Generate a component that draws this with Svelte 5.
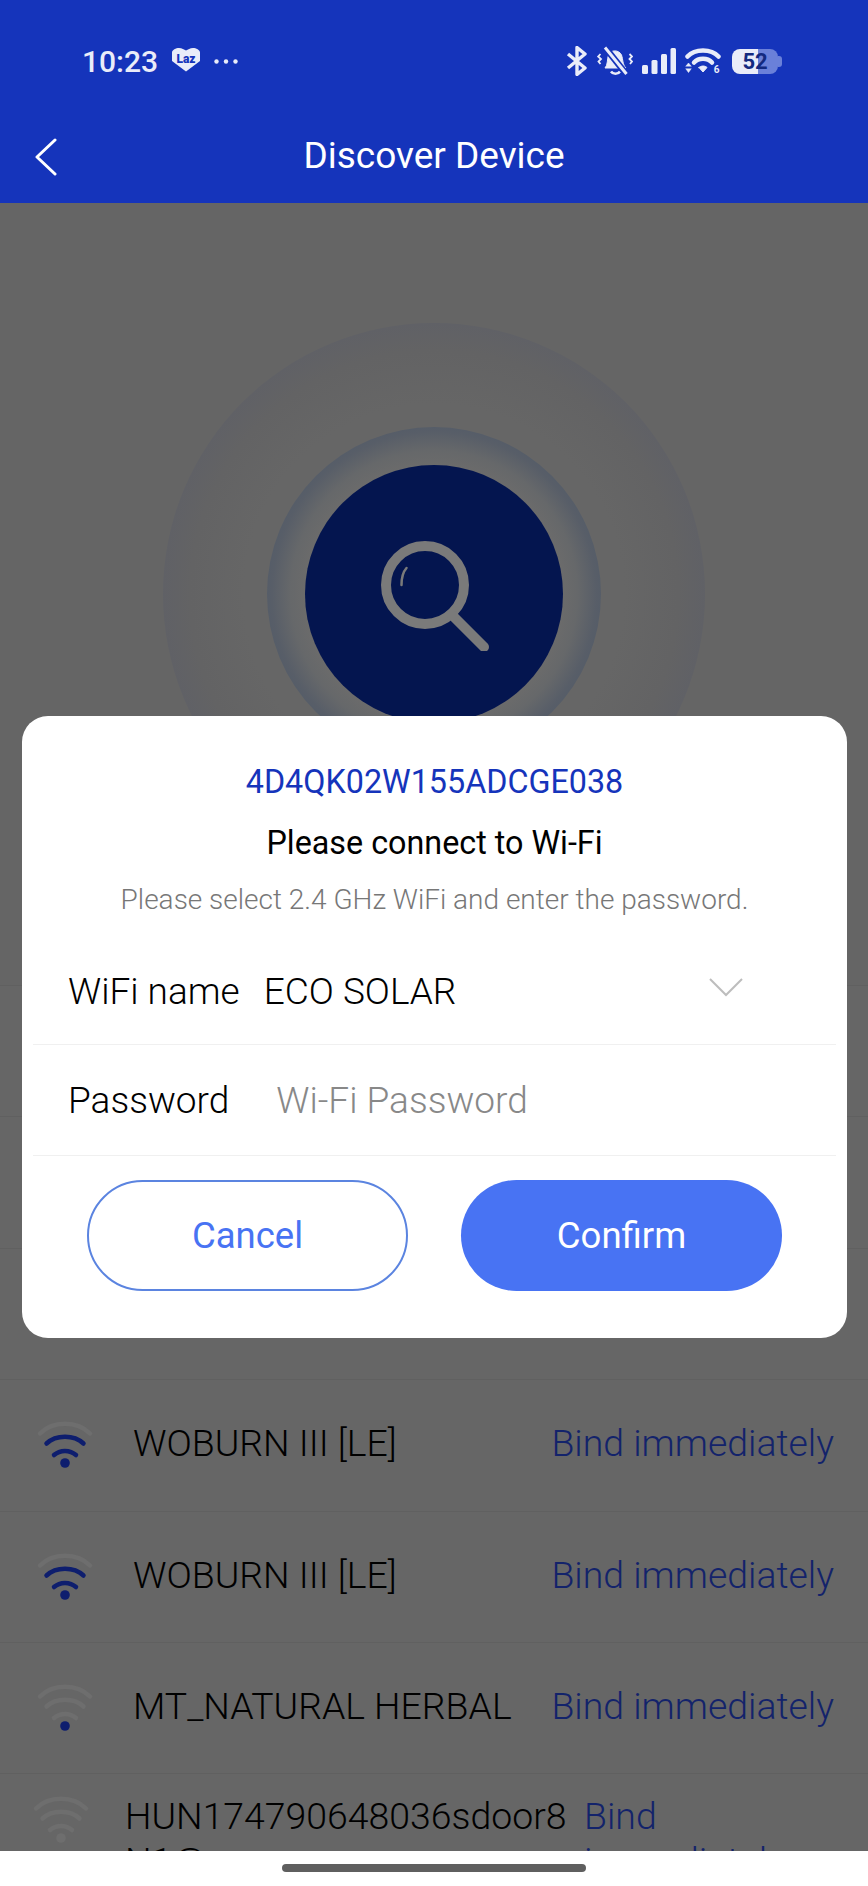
<script lang="ts">
    interface Device {
        name: string;
        level: number;
        long?: boolean;
        hidden?: boolean;
    }

    // the first rows sit behind the dialog
    const devices: Device[] = [
        { name: '', level: 0, hidden: true },
        { name: '', level: 0, hidden: true },
        { name: '', level: 0, hidden: true },
        { name: 'WOBURN III [LE]', level: 2 },
        { name: 'WOBURN III [LE]', level: 2 },
        { name: 'MT_NATURAL HERBAL', level: 0 },
        { name: 'HUN174790648036sdoor8 N1@', level: -1, long: true },
    ];

    const arcs = [
        'M6 14.5C19 1.5 43 1.5 56 14.5',
        'M12.5 24.5C22 15.5 40 15.5 49.5 24.5',
        'M20 36C26 30.5 36 30.5 42 36',
    ];
</script>

<div class="page">
    <header class="top">
        <div class="status">
            <div class="status-left">
                <span class="clock">10:23</span>
                <svg class="laz" viewBox="0 0 30 25" width="30" height="25">
                    <path d="M1 5.500C1 3 5 1 8 1 11 1 13 2.500 15 3.500 17 2.500 19 1 22 1 25 1 29 3 29 5.500V14L15 24.500 1 14Z" fill="#e9ecf9" />
                    <text x="15" y="15.500" text-anchor="middle" class="laz-text">Laz</text>
                </svg>
                <svg class="dots" viewBox="0 0 24 5" width="24" height="5">
                    <circle cx="2.500" cy="2.500" r="2.200" />
                    <circle cx="12" cy="2.500" r="2.200" />
                    <circle cx="21.500" cy="2.500" r="2.200" />
                </svg>
            </div>
            <div class="status-right">
                <svg viewBox="0 0 22 30" width="22" height="30" fill="none" stroke="#e9ecf9" stroke-width="3.400">
                    <path d="M2 8 19 22 11 28.500V1.500L19 8 2 22" stroke-linejoin="round" />
                </svg>
                <svg viewBox="0 0 36 30" width="36" height="30" fill="none" stroke="#e9ecf9">
                    <path d="M8 22C11 19 10 13 11.500 9 13.500 3.500 22 3.500 24.500 9 26 13 25.500 19 29 22Z" fill="#e9ecf9" stroke-width="1" />
                    <path d="M14 25.500C16 28.500 21 28.500 23 25.500" stroke-width="2.600" />
                    <path d="M7 0 30 29" stroke="#1534bb" stroke-width="6.500" />
                    <path d="M8 1.500 29.500 28" stroke-width="3" />
                    <path d="M3.500 8 1.200 10.500 4 13 1.500 15.500 3.500 18M32.500 8 35 10.500 32.500 13 35 15.500 33 18" stroke-width="1.800" />
                </svg>
                <svg viewBox="0 0 34 26" width="34" height="26" fill="#e9ecf9">
                    <rect x="0" y="17" width="6" height="9" rx="1.500" />
                    <rect x="9.500" y="12" width="6" height="14" rx="1.500" />
                    <rect x="19" y="6" width="6" height="20" rx="1.500" />
                    <rect x="28.500" y="0" width="5.500" height="26" rx="1.500" />
                </svg>
                <svg viewBox="0 0 38 28" width="38" height="28" fill="none" stroke="#e9ecf9" stroke-width="4.500" stroke-linecap="round">
                    <path d="M2.500 9.500C10 1.500 26 1.500 33.500 9.500" />
                    <path d="M9 15.500C13.500 10.500 22.500 10.500 27 15.500" />
                    <path d="M14 20.500 18 25 22 20.500C20 18.500 16 18.500 14 20.500Z" fill="#e9ecf9" stroke-width="1" stroke-linejoin="round" />
                    <path d="M1 19 3.500 16 6 19ZM1 22 3.500 25.500 6 22Z" fill="#e9ecf9" stroke-width="0.600" />
                    <text x="31.500" y="26" text-anchor="middle" class="wifi-six">6</text>
                </svg>
                <div class="battery">52</div>
            </div>
        </div>
        <div class="nav">
            <svg class="back" viewBox="0 0 24 38" width="24" height="38" fill="none" stroke="#fff" stroke-width="3" stroke-linecap="round" stroke-linejoin="round">
                <path d="M21 2 3 19 21 36" />
            </svg>
            <span>Discover Device</span>
        </div>
    </header>

    <main class="body">
        <section class="hero">
            <div class="ring-outer">
                <div class="ring-mid">
                    <div class="core">
                        <svg viewBox="0 0 110 110" width="110" height="110" fill="none" stroke="#7a7a7a" stroke-linecap="round">
                            <circle cx="44" cy="44" r="39" stroke-width="10" />
                            <path d="M71 74 103 106" stroke-width="10" />
                            <path d="M20.500 44C20.500 36 22 31 25.500 27" stroke-width="2.500" />
                        </svg>
                    </div>
                </div>
            </div>
        </section>

        <ul class="list">
            {#each devices as device}
                <li class="row" class:long={device.long}>
                    {#if !device.hidden}
                        <svg class="signal" viewBox="0 0 62 50" width="62" height="50" fill="none" stroke-width="4.500" stroke-linecap="round">
                            {#each arcs as d, i}
                                <path {d} stroke={device.level >= 3 - i ? '#0e1e6e' : '#6e6e6e'} />
                            {/each}
                            <circle cx="31" cy="44" r="4.800" fill={device.level >= 0 ? '#0e1e6e' : '#6e6e6e'} stroke="none" />
                        </svg>
                        <span class="name">{device.name}</span>
                        <span class="bind">Bind immediately</span>
                    {/if}
                </li>
            {/each}
        </ul>

        <div class="dialog">
            <p class="serial">4D4QK02W155ADCGE038</p>
            <h2>Please connect to Wi-Fi</h2>
            <p class="hint">Please select 2.4 GHz WiFi and enter the password.</p>

            <div class="field wifi">
                <span class="label">WiFi name</span>
                <span class="value">ECO SOLAR</span>
                <svg viewBox="0 0 34 20" width="34" height="20" fill="none" stroke="#bdbdbd" stroke-width="2">
                    <path d="M1 2 17 18 33 2" />
                </svg>
            </div>
            <div class="field password">
                <span class="label">Password</span>
                <span class="placeholder">Wi-Fi Password</span>
            </div>

            <div class="actions">
                <button class="cancel" type="button">Cancel</button>
                <button class="confirm" type="button">Confirm</button>
            </div>
        </div>
    </main>

    <footer class="bottom">
        <span class="pill"></span>
    </footer>
</div>

<style>
    :global(body) {
        margin: 0;
        background: #fff;
    }
    .page {
        display: flex;
        flex-direction: column;
        width: 868px;
        height: 1886px;
        overflow: hidden;
        font-family: Roboto, "Liberation Sans", sans-serif;
    }
    .top {
        flex: none;
        height: 203px;
        background: #1534bb;
        color: #fff;
    }
    .status {
        display: flex;
        justify-content: space-between;
        align-items: center;
        height: 122px;
        box-sizing: border-box;
        padding: 0 86px 0 82px;
    }
    .status-left {
        display: flex;
        align-items: center;
        color: #e9ecf9;
    }
    .clock {
        font-size: 30px;
        font-weight: 500;
        margin-right: 13px;
    }
    .laz {
        margin-right: 13px;
        margin-top: -3px;
    }
    .laz-text {
        font-size: 12px;
        font-weight: 900;
        fill: #1534bb;
    }
    .dots {
        fill: #e9ecf9;
    }
    .status-right {
        display: flex;
        align-items: center;
        gap: 9px;
    }
    .wifi-six {
        font-size: 10px;
        font-weight: 700;
        fill: #e9ecf9;
        stroke: none;
    }
    .battery {
        position: relative;
        width: 46px;
        height: 25px;
        margin-right: 4px;
        border-radius: 8px;
        background: linear-gradient(90deg, #e9ecf9 26px, #6a80d9 26px);
        text-align: center;
        font-size: 22px;
        line-height: 25px;
        font-weight: 700;
        color: #13297f;
    }
    .battery::after {
        content: "";
        position: absolute;
        right: -4px;
        top: 7px;
        width: 4px;
        height: 11px;
        border-radius: 0 3px 3px 0;
        background: #6a80d9;
    }
    .nav {
        position: relative;
        height: 81px;
        display: flex;
        justify-content: center;
        align-items: center;
        font-size: 37px;
        margin-top: -7px;
    }
    .back {
        position: absolute;
        left: 34px;
        top: 23px;
    }
    .body {
        flex: 1;
        position: relative;
        overflow: hidden;
        background: #666;
    }
    .hero {
        height: 782px;
        box-sizing: border-box;
        padding-top: 120px;
        display: flex;
        justify-content: center;
        background: #656565;
    }
    .ring-outer {
        width: 542px;
        height: 542px;
        border-radius: 50%;
        display: flex;
        justify-content: center;
        align-items: center;
        background: radial-gradient(circle closest-side, #666 70%, #636364 90%, #606166 100%);
    }
    .ring-mid {
        width: 334px;
        height: 334px;
        border-radius: 50%;
        display: flex;
        justify-content: center;
        align-items: center;
        background: radial-gradient(circle closest-side, #6b6b6b 77%, #66686a 86%, #585e68 97%, #565d68 100%);
    }
    .core {
        width: 258px;
        height: 258px;
        border-radius: 50%;
        background: #04154f;
        display: flex;
        justify-content: center;
        align-items: center;
    }
    .core svg {
        margin: 4px 0 0 4px;
    }
    .list {
        margin: 0;
        padding: 0;
        list-style: none;
    }
    .row {
        height: 131.400px;
        box-sizing: border-box;
        border-top: 1px solid #606060;
        display: flex;
        align-items: center;
        padding: 0 0 3px 34px;
    }
    .signal {
        flex: none;
        margin-right: 37px;
        margin-top: 1px;
    }
    .name {
        flex: 1;
        font-size: 37.400px;
        font-weight: 300;
        line-height: 45px;
        color: #000;
        overflow-wrap: anywhere;
    }
    .bind {
        font-size: 37.400px;
        font-weight: 300;
        line-height: 45px;
        color: #13236b;
        margin-right: 34px;
    }
    .row.long {
        align-items: flex-start;
        padding-top: 20px;
    }
    .row.long .signal {
        margin-right: 33px;
        margin-left: -4px;
        margin-top: 0;
    }
    .row.long .name {
        flex: none;
        width: 450px;
    }
    .row.long .bind {
        width: 240px;
        margin-left: 9px;
        margin-right: 0;
    }
    .dialog {
        position: absolute;
        left: 22px;
        top: 513px;
        width: 825px;
        height: 622px;
        box-sizing: border-box;
        background: #fff;
        border-radius: 26px;
        padding-top: 48px;
        text-align: center;
    }
    .serial {
        margin: 0;
        font-size: 32.300px;
        line-height: 36px;
        color: #1534bb;
    }
    h2 {
        margin: 25px 0 0;
        font-size: 32.300px;
        line-height: 36px;
        font-weight: 450;
        color: #000;
    }
    .hint {
        margin: 21px 0 0;
        font-size: 28px;
        line-height: 36px;
        font-weight: 300;
        color: #777;
    }
    .field {
        display: flex;
        align-items: center;
        margin: 0 11px;
        padding-left: 35px;
        font-size: 37px;
        font-weight: 300;
        box-sizing: border-box;
        border-bottom: 1px solid #f0f0f0;
        color: #000;
    }
    .wifi {
        height: 111px;
        margin-top: 16px;
        padding-top: 4px;
    }
    .wifi .value {
        margin-left: 24px;
        flex: 1;
        text-align: left;
    }
    .wifi svg {
        margin: -8px 93px 0 0;
    }
    .password {
        height: 111px;
    }
    .placeholder {
        margin-left: 47px;
        color: #888;
    }
    .actions {
        display: flex;
        justify-content: space-between;
        padding: 24px 65px 0;
    }
    button {
        width: 321px;
        height: 111px;
        border-radius: 56px;
        font-family: inherit;
        font-size: 36.500px;
        font-weight: 450;
        box-sizing: border-box;
    }
    .cancel {
        background: #fff;
        color: #4873f3;
        border: 2px solid #5b84e0;
    }
    .confirm {
        background: #4873f3;
        color: #fff;
        border: none;
    }
    .bottom {
        flex: none;
        height: 35px;
        background: #fff;
        display: flex;
        justify-content: center;
        padding-top: 13px;
        box-sizing: border-box;
    }
    .pill {
        width: 304px;
        height: 8px;
        border-radius: 4px;
        background: #5f5f5f;
    }
</style>
